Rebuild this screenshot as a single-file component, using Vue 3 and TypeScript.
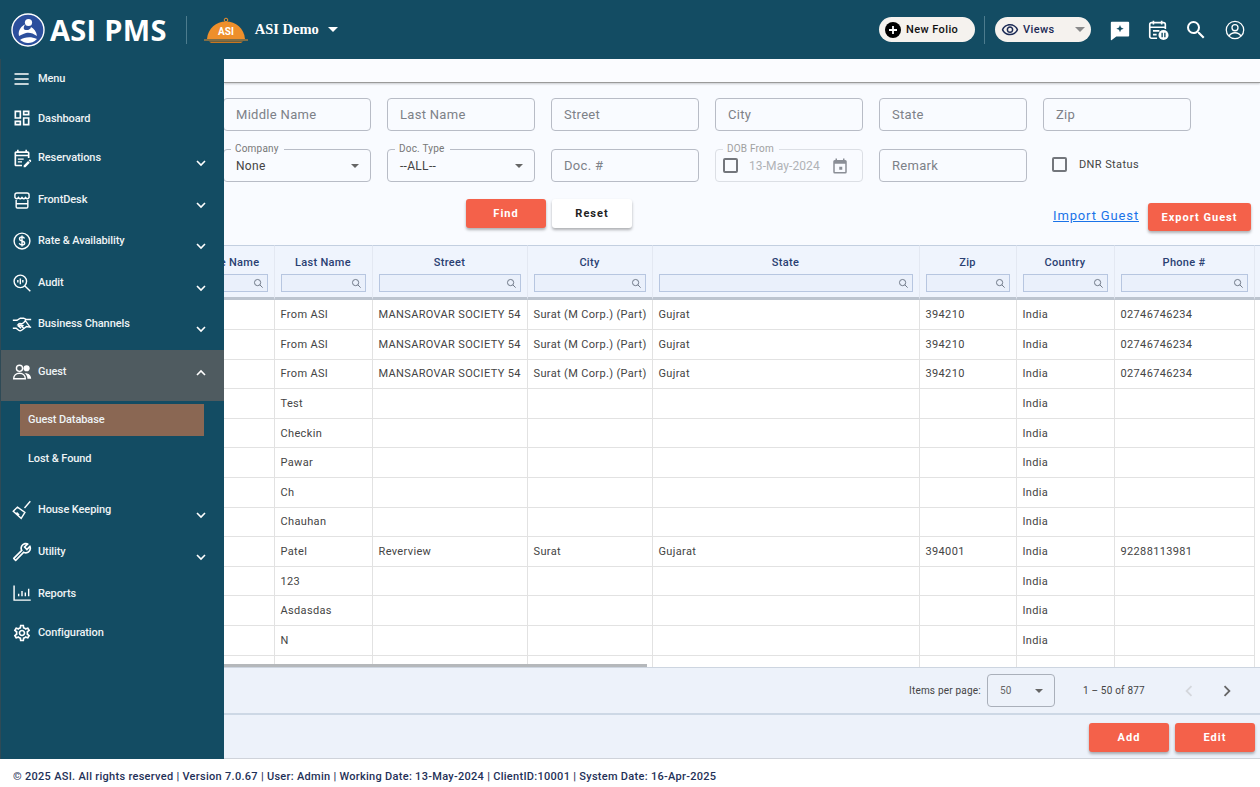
<template>
  <div class="page">
    <header class="topbar">
      <div class="brand">
        <svg class="logo" viewBox="0 0 34 34">
          <circle cx="17" cy="17" r="16" fill="#2c4f9d" stroke="#fff" stroke-width="1.4" />
          <circle cx="17.5" cy="9.5" r="3.6" fill="#fff" />
          <path d="M8 23c-1.5-6 3-10.500 6-11.500-1.500 2.500-2 5 .5 5.500 2.500.4 5-.4 5.500-3 3 1.500 5.500 4.500 6 9-4-3-8-4-11-3-3 .8-5 2-7 3z" fill="#fff" />
          <path d="M9 27c4-2.500 10-4 17-1-3 3-6 4-9 4s-5-1-8-3z" fill="#fff" />
        </svg>
        <span class="brand-name">ASI PMS</span>
      </div>
      <span class="brand-sep"></span>
      <svg class="dome" viewBox="0 0 44 26">
        <circle cx="22" cy="3" r="1.800" fill="none" stroke="#f0902a" stroke-width="1" />
        <path d="M3 22C4 11 12 4.500 22 4.500S40 11 41 22z" fill="#ee8f2b" />
        <path d="M0 23h44" stroke="#ee8f2b" stroke-width="1" />
        <path d="M5 24.500h34l-2 1.500H7z" fill="#c9761f" />
        <text x="22" y="18" text-anchor="middle" class="dome-text">ASI</text>
      </svg>
      <span class="property">ASI Demo</span>
      <span class="caret caret-white"></span>

      <div class="top-right">
        <button class="pill pill-folio">
          <svg class="plus" viewBox="0 0 16 16">
            <circle cx="8" cy="8" r="8" fill="#000" />
            <path d="M8 4v8M4 8h8" stroke="#fff" stroke-width="1.800" />
          </svg>
          New Folio
        </button>
        <span class="top-sep"></span>
        <button class="pill pill-views">
          <svg class="eye" viewBox="0 0 24 24">
            <path fill="#1b2a55" d="M12 6a9.770 9.770 0 0 1 8.820 5.500A9.770 9.770 0 0 1 12 17a9.770 9.770 0 0 1-8.820-5.500A9.770 9.770 0 0 1 12 6m0-2C7 4 2.730 7.110 1 11.500 2.730 15.890 7 19 12 19s9.270-3.110 11-7.500C21.270 7.110 17 4 12 4zm0 5a2.500 2.500 0 0 1 0 5 2.500 2.500 0 0 1 0-5m0-2c-2.480 0-4.500 2.020-4.500 4.500S9.520 16 12 16s4.500-2.020 4.500-4.500S14.480 7 12 7z" />
          </svg>
          Views
          <span class="caret caret-grey"></span>
        </button>
        <svg class="top-icon icon-comment" viewBox="0 0 24 24">
          <path fill="#fff" d="M3 3h18a1 1 0 0 1 1 1v14a1 1 0 0 1-1 1H8l-5 4a.6.6 0 0 1-1-.5V4a1 1 0 0 1 1-1z" />
          <path fill="#134c63" d="M12 6.500l1.100 2.900 2.900 1.100-2.900 1.100L12 14.500l-1.100-2.900L8 10.500l2.900-1.100z" />
        </svg>
        <svg class="top-icon icon-cal" viewBox="0 0 24 24">
          <path fill="none" stroke="#fff" stroke-width="1.800" d="M11 21H5a2 2 0 0 1-2-2V6a2 2 0 0 1 2-2h13a2 2 0 0 1 2 2v5M3 9h17M7 2v4M16 2v4M6.500 13h7M6.500 17h4" />
          <circle cx="18" cy="17.500" r="5.500" fill="#fff" />
          <path d="M16.500 15v5M19.500 15v5" stroke="#134c63" stroke-width="1.500" />
        </svg>
        <svg class="top-icon icon-search" viewBox="0 0 24 24">
          <path fill="#fff" d="M15.500 14h-.79l-.28-.27A6.470 6.470 0 0 0 16 9.500 6.500 6.500 0 1 0 9.500 16c1.610 0 3.090-.59 4.230-1.570l.27.28v.79l5 4.990L20.490 19l-4.990-5zm-6 0C7.010 14 5 11.990 5 9.500S7.010 5 9.500 5 14 7.010 14 9.500 11.990 14 9.500 14z" />
        </svg>
        <svg class="top-icon icon-user" viewBox="0 0 24 24">
          <circle cx="12" cy="12" r="9.500" fill="none" stroke="#fff" stroke-width="1.400" />
          <circle cx="12" cy="9.500" r="3.300" fill="none" stroke="#fff" stroke-width="1.400" />
          <path d="M5.500 18.500c1.500-2.500 4-3.500 6.500-3.500s5 1 6.500 3.500" fill="none" stroke="#fff" stroke-width="1.400" />
        </svg>
      </div>
    </header>

    <div class="body">
      <aside class="sidebar">
        <div class="nav-top">
          <svg class="nav-icon" viewBox="0 0 24 24"><path class="st" d="M3 6h17M3 12h17M3 18h17" /></svg>
          <span>Menu</span>
        </div>
        <div class="nav-top">
          <svg class="nav-icon" viewBox="0 0 24 24"><path class="fl" :d="icons.dashboard" /></svg>
          <span>Dashboard</span>
        </div>
        <div v-for="item in groupsA" :key="item.label" class="nav-group">
          <svg class="nav-icon" viewBox="0 0 24 24"><path :class="item.fill ? 'fl' : 'st'" :d="icons[item.icon]" /></svg>
          <span>{{ item.label }}</span>
          <svg class="chev" viewBox="0 0 12 12"><path d="M2 4l4 4 4-4" /></svg>
        </div>

        <div class="nav-guest">
          <svg class="nav-icon guest-icon" viewBox="0 0 24 24">
            <circle cx="9" cy="7.500" r="3.700" class="st" />
            <path class="st" d="M2 20c0-4 3-6.500 7-6.500s7 2.500 7 6.500z" />
            <circle cx="17.500" cy="7.500" r="3.700" fill="#fff" />
            <path fill="#fff" d="M15 13.500c4-.8 8 2 8 6.500h-4.500c0-2.500-1-5-3.500-6.500z" />
          </svg>
          <span>Guest</span>
          <svg class="chev" viewBox="0 0 12 12"><path d="M2 8l4-4 4 4" /></svg>
        </div>
        <div class="nav-sub">
          <div class="sub-item sub-active">Guest Database</div>
          <div class="sub-item">Lost &amp; Found</div>
        </div>

        <div v-for="item in groupsB" :key="item.label" class="nav-group">
          <svg class="nav-icon" viewBox="0 0 24 24" :class="{ flip: item.icon === 'wrench' }"><path :class="item.fill ? 'fl' : 'st'" :d="icons[item.icon]" /></svg>
          <span>{{ item.label }}</span>
          <svg class="chev" viewBox="0 0 12 12"><path d="M2 4l4 4 4-4" /></svg>
        </div>
        <div class="nav-top nav-reports">
          <svg class="nav-icon" viewBox="0 0 24 24"><path class="st" d="M2.500 3v17.500h20M8 16v-3M12 16V9.500M16 16v-4.500M20 16V7" /></svg>
          <span>Reports</span>
        </div>
        <div class="nav-top">
          <svg class="nav-icon" viewBox="0 0 24 24"><path class="fl" :d="icons.settings" /></svg>
          <span>Configuration</span>
        </div>
      </aside>

      <main class="content">
        <div class="strip"></div>

        <section class="filters">
          <div class="field-grid">
            <div v-for="f in firstRow" :key="f" class="field"><span class="ph">{{ f }}</span></div>

            <div class="field field-label">
              <span class="legend">Company</span>
              <span class="val">None</span>
              <span class="caret caret-dark"></span>
            </div>
            <div class="field field-label">
              <span class="legend">Doc. Type</span>
              <span class="val">--ALL--</span>
              <span class="caret caret-dark"></span>
            </div>
            <div class="field"><span class="ph">Doc. #</span></div>
            <div class="field field-label field-disabled">
              <span class="legend">DOB From</span>
              <span class="check"></span>
              <span class="date">13-May-2024</span>
              <svg class="cal" viewBox="0 0 24 24">
                <path fill="#8a8e96" d="M19 4h-1V2h-2v2H8V2H6v2H5a2 2 0 0 0-2 2v14a2 2 0 0 0 2 2h14a2 2 0 0 0 2-2V6a2 2 0 0 0-2-2zm0 16H5V9h14v11zM11 13h4v4h-4z" />
              </svg>
            </div>
            <div class="field"><span class="ph">Remark</span></div>
            <label class="dnr"><span class="check"></span>DNR Status</label>
          </div>

          <div class="filter-actions">
            <button class="btn btn-red btn-find">Find</button>
            <button class="btn btn-white">Reset</button>
            <a class="import">Import Guest</a>
            <button class="btn btn-red btn-export">Export Guest</button>
          </div>
        </section>

        <div class="table-wrap">
          <table class="grid">
            <colgroup>
              <col v-for="c in columns" :key="c.name" :style="{ width: c.w + 'px' }" />
            </colgroup>
            <thead>
              <tr>
                <th v-for="c in columns" :key="c.name">
                  <template v-if="c.name">
                    <div class="th-name">{{ c.name }}</div>
                    <div class="th-search">
                      <svg viewBox="0 0 12 12"><circle cx="5" cy="5" r="3.400" /><path d="M7.500 7.500L10.500 10.500" /></svg>
                    </div>
                  </template>
                </th>
              </tr>
            </thead>
            <tbody>
              <tr v-for="(r, i) in rows" :key="i">
                <td></td>
                <td>{{ r[0] }}</td>
                <td>{{ r[1] }}</td>
                <td>{{ r[2] }}</td>
                <td>{{ r[3] }}</td>
                <td>{{ r[4] }}</td>
                <td>{{ r[5] }}</td>
                <td>{{ r[6] }}</td>
                <td></td>
              </tr>
            </tbody>
          </table>
          <div class="hscroll"></div>
        </div>

        <div class="pager">
          <span class="pager-label">Items per page:</span>
          <div class="pager-select">
            <span>50</span>
            <span class="caret caret-dark"></span>
          </div>
          <span class="pager-range">1 – 50 of 877</span>
          <svg class="pager-arrow prev" viewBox="0 0 24 24"><path d="M15.400 7.400L14 6l-6 6 6 6 1.400-1.400L10.800 12z" /></svg>
          <svg class="pager-arrow next" viewBox="0 0 24 24"><path d="M10 6L8.600 7.400 13.200 12l-4.600 4.600L10 18l6-6z" /></svg>
        </div>

        <div class="bottom-actions">
          <button class="btn btn-red">Add</button>
          <button class="btn btn-red">Edit</button>
        </div>
      </main>
    </div>

    <footer class="footer">© 2025 ASI. All rights reserved | Version 7.0.67 | User: Admin | Working Date: 13-May-2024 | ClientID:10001 | System Date: 16-Apr-2025</footer>
  </div>
</template>

<script setup lang="ts">
interface NavItem {
  label: string
  icon: string
  fill?: boolean
}

const icons: Record<string, string> = {
  dashboard: 'M19 5v2h-4V5h4M9 5v6H5V5h4m10 8v6h-4v-6h4M9 17v2H5v-2h4M21 3h-8v6h8V3zM11 3H3v10h8V3zm10 8h-8v10h8V11zm-10 4H3v6h8v-6z',
  calendar: 'M5 10h14v2h2V6c0-1.100-.9-2-2-2h-1V2h-2v2H8V2H6v2H5c-1.110 0-1.990.9-1.990 2L3 20c0 1.100.89 2 2 2h7v-2H5V10zm0-4h14v2H5V6zm17.840 10.280-.71.71-2.120-2.120.71-.71c.39-.39 1.020-.39 1.410 0l.71.71c.39.39.39 1.020 0 1.410zm-3.540-.7 2.120 2.120-5.300 5.300H14v-2.120l5.300-5.300zM7 12.500h7V14H7zM7 16h5v1.500H7z',
  store: 'M3.500 9V6a2.500 2.500 0 0 1 2.500-2.500h12A2.500 2.500 0 0 1 20.500 6v3c-1.500 2-2.700 2-4.250 0-1.500 2-2.700 2-4.250 0-1.500 2-2.700 2-4.250 0-1.550 2-2.750 2-4.250 0zM5 12v8a1.500 1.500 0 0 0 1.500 1.500h11A1.500 1.500 0 0 0 19 20v-8M5 16.500h14',
  rate: 'M12 2.500a9.500 9.500 0 1 0 0 19 9.500 9.500 0 0 0 0-19zM15 9c-.5-1.200-1.700-1.800-3-1.800-1.600 0-3 .8-3 2.300 0 3.300 6.200 1.700 6.200 5 0 1.500-1.500 2.300-3.200 2.300-1.500 0-2.800-.7-3.300-2M12 5.500v13',
  audit: 'M10 2.500a7.500 7.500 0 1 0 0 15 7.500 7.500 0 0 0 0-15zM15.500 15.500L22 22M7 8.500v3M10 6.500v7M13 8.500v3',
  shake: 'M1 7.500h5l4-2.500h4l3 1.500h6M1 17h4l3 2.500c1 .8 2.500.8 3.500 0l6-4.500 5.500 1M9 11c2 1.500 4.500 1 7-3l6 8M9 11l-2 2c3 1 5 .5 7 1M7 14l4 3M10 13l4 4',
  broom: 'M22 1.500L15 9.500M6.500 8.500l9 6.500-4.500 7-9.500-8.500zM5.500 15l3 3',
  wrench: 'M22.610 18.990l-9.080-9.080c.93-2.340.45-5.100-1.440-7C9.790.61 6.210.4 3.660 2.260L7.500 6.110 6.080 7.520 2.250 3.690C.39 6.230.6 9.820 2.900 12.110c1.860 1.860 4.570 2.350 6.890 1.480l9.110 9.110c.39.39 1.020.39 1.410 0l2.300-2.300c.4-.38.4-1.010 0-1.410zm-3 1.600l-9.460-9.460c-.61.45-1.290.72-2 .82-1.360.2-2.790-.21-3.830-1.250C3.370 9.760 2.930 8.500 3 7.260l3.090 3.090 4.240-4.240-3.090-3.090c1.240-.07 2.490.37 3.440 1.310 1.080 1.080 1.490 2.570 1.240 3.960-.12.71-.42 1.370-.88 1.960l9.450 9.450-.88.88z',
  settings: 'M19.430 12.980c.04-.32.07-.64.07-.98 0-.34-.03-.66-.07-.98l2.110-1.650c.19-.15.24-.42.12-.64l-2-3.460c-.09-.16-.26-.25-.44-.25-.06 0-.12.01-.17.03l-2.490 1c-.52-.4-1.080-.73-1.690-.98l-.38-2.650C14.460 2.180 14.250 2 14 2h-4c-.25 0-.46.18-.49.42l-.38 2.650c-.61.25-1.170.59-1.690.98l-2.490-1c-.06-.02-.12-.03-.18-.03-.17 0-.34.09-.43.25l-2 3.460c-.13.22-.07.49.12.64l2.110 1.650c-.04.32-.07.65-.07.98 0 .33.03.66.07.98l-2.110 1.650c-.19.15-.24.42-.12.64l2 3.460c.09.16.26.25.44.25.06 0 .12-.01.17-.03l2.490-1c.52.4 1.080.73 1.690.98l.38 2.650c.03.24.24.42.49.42h4c.25 0 .46-.18.49-.42l.38-2.650c.61-.25 1.170-.59 1.690-.98l2.490 1c.06.02.12.03.18.03.17 0 .34-.09.43-.25l2-3.460c.12-.22.07-.49-.12-.64l-2.110-1.650zm-1.980-1.710c.04.31.05.52.05.73 0 .21-.02.43-.05.73l-.14 1.130.89.7 1.080.84-.7 1.210-1.270-.51-1.040-.42-.9.68c-.43.32-.84.56-1.250.73l-1.060.43-.16 1.130-.2 1.350h-1.400l-.19-1.350-.16-1.130-1.060-.43c-.43-.18-.83-.41-1.230-.71l-.91-.7-1.060.43-1.270.51-.7-1.210 1.080-.84.89-.7-.14-1.130c-.03-.31-.05-.54-.05-.74s.02-.43.05-.73l.14-1.130-.89-.7-1.080-.84.7-1.210 1.270.51 1.040.42.9-.68c.43-.32.84-.56 1.250-.73l1.060-.43.16-1.130.2-1.350h1.390l.19 1.350.16 1.130 1.060.43c.43.18.83.41 1.230.71l.91.7 1.060-.43 1.270-.51.7 1.210-1.070.85-.89.7.14 1.130zM12 8c-2.210 0-4 1.790-4 4s1.790 4 4 4 4-1.790 4-4-1.790-4-4-4zm0 6c-1.100 0-2-.9-2-2s.9-2 2-2 2 .9 2 2-.9 2-2 2z'
}

const groupsA: NavItem[] = [
  { label: 'Reservations', icon: 'calendar', fill: true },
  { label: 'FrontDesk', icon: 'store' },
  { label: 'Rate & Availability', icon: 'rate' },
  { label: 'Audit', icon: 'audit' },
  { label: 'Business Channels', icon: 'shake' }
]

const groupsB: NavItem[] = [
  { label: 'House Keeping', icon: 'broom' },
  { label: 'Utility', icon: 'wrench', fill: true }
]

const firstRow = ['Middle Name', 'Last Name', 'Street', 'City', 'State', 'Zip']

const columns = [
  { name: 'Middle Name', w: 98 },
  { name: 'Last Name', w: 98 },
  { name: 'Street', w: 155 },
  { name: 'City', w: 125 },
  { name: 'State', w: 267 },
  { name: 'Zip', w: 97 },
  { name: 'Country', w: 98 },
  { name: 'Phone #', w: 140 },
  { name: '', w: 60 }
]

const asi = ['From ASI', 'MANSAROVAR SOCIETY 54', 'Surat (M Corp.) (Part)', 'Gujrat', '394210', 'India', '02746746234']
const nameOnly = (n: string) => [n, '', '', '', '', 'India', '']

const rows: string[][] = [
  asi,
  asi,
  asi,
  nameOnly('Test'),
  nameOnly('Checkin'),
  nameOnly('Pawar'),
  nameOnly('Ch'),
  nameOnly('Chauhan'),
  ['Patel', 'Reverview', 'Surat', 'Gujarat', '394001', 'India', '92288113981'],
  nameOnly('123'),
  nameOnly('Asdasdas'),
  nameOnly('N'),
  ['', '', '', '', '', '', '']
]
</script>

<style scoped>
.page {
  width: 1260px;
  height: 787px;
  display: flex;
  flex-direction: column;
  overflow: hidden;
  font-family: Roboto, "Liberation Sans", sans-serif;
  background: #fff;
}

.topbar {
  height: 59px;
  flex: none;
  display: flex;
  align-items: center;
  background: #134c63;
  padding-left: 11px;
  padding-right: 14px;
}

.brand {
  display: flex;
  align-items: center;
}

.logo {
  width: 34px;
  height: 34px;
}

.brand-name {
  margin-left: 5px;
  font-family: "Open Sans", sans-serif;
  font-weight: 700;
  font-size: 29px;
  letter-spacing: 0.3px;
  color: #fff;
}

.brand-sep {
  width: 1px;
  height: 28px;
  margin-left: 19px;
  background: #4d7c8e;
}

.dome {
  width: 44px;
  height: 26px;
  margin-left: 17px;
}

.dome-text {
  font-family: Roboto, sans-serif;
  font-size: 10px;
  font-weight: 700;
  fill: #fff;
}

.property {
  margin-left: 7px;
  font-family: "Liberation Serif", serif;
  font-weight: 700;
  font-size: 14.500px;
  color: #fff;
}

.caret {
  display: inline-block;
  width: 0;
  height: 0;
  border-left: 5px solid transparent;
  border-right: 5px solid transparent;
  border-top: 5px solid #757575;
}

.caret-white {
  margin-left: 9px;
  border-top-color: #fff;
}

.top-right {
  margin-left: auto;
  display: flex;
  align-items: center;
}

.pill {
  height: 25px;
  border: none;
  border-radius: 13px;
  background: #f5f2ee;
  display: flex;
  align-items: center;
  font-family: inherit;
  font-size: 11px;
  font-weight: 500;
  letter-spacing: 0.4px;
  color: #111;
  padding: 0 0 0 6px;
}

.pill-folio {
  width: 96px;
}

.plus {
  width: 16px;
  height: 16px;
  margin-right: 5px;
}

.top-sep {
  width: 1px;
  height: 28px;
  margin: 0 10px 0 9px;
  background: #4d7c8e;
}

.pill-views {
  width: 96px;
  position: relative;
  color: #1b2a55;
}

.eye {
  width: 18px;
  height: 18px;
  margin-right: 4px;
}

.caret-grey {
  margin-left: auto;
  margin-right: 6px;
  border-top-color: #8a8a8a;
}

.top-icon {
  display: block;
}

.icon-comment {
  width: 22px;
  height: 22px;
  margin-left: 18px;
}

.icon-cal {
  width: 22px;
  height: 22px;
  margin-left: 16px;
}

.icon-search {
  width: 24px;
  height: 24px;
  margin-left: 15px;
}

.icon-user {
  width: 22px;
  height: 22px;
  margin-left: 16px;
}

.body {
  flex: 1;
  min-height: 0;
  display: flex;
}

.sidebar {
  width: 224px;
  flex: none;
  background: #134c63;
  border-left: 1px solid #2e4a56;
  box-sizing: border-box;
  color: #eef3f5;
  font-size: 11px;
  font-weight: 500;
  letter-spacing: -0.1px;
}

.nav-top {
  height: 39.500px;
  display: flex;
  align-items: center;
  padding-left: 11px;
}

.nav-reports {
  margin-top: 0.500px;
}

.nav-group {
  height: 41.500px;
  display: flex;
  align-items: flex-start;
  padding: 10px 0 0 11px;
  box-sizing: border-box;
}

.nav-group > span {
  line-height: 20px;
}

.nav-icon {
  width: 20px;
  height: 20px;
  flex: none;
  margin-right: 6px;
}

.nav-icon .st,
.guest-icon .st {
  fill: none;
  stroke: #fff;
  stroke-width: 1.700;
}

.nav-icon .fl {
  fill: #fff;
}

.flip {
  transform: scaleX(-1);
}

.chev {
  width: 12px;
  height: 12px;
  margin-left: auto;
  margin-right: 17px;
  margin-top: 9px;
  fill: none;
  stroke: #fff;
  stroke-width: 1.600;
}

.nav-guest {
  height: 51px;
  margin-top: 4.500px;
  background: #4f5b60;
  display: flex;
  align-items: flex-start;
  padding: 12px 0 0 11px;
  box-sizing: border-box;
}

.nav-guest > span {
  line-height: 20px;
}

.nav-guest .chev {
  margin-top: 5px;
}

.nav-sub {
  height: 89px;
  padding-top: 3px;
  box-sizing: border-box;
}

.sub-item {
  height: 32px;
  margin: 0 20px 7px 19px;
  padding-left: 8px;
  line-height: 32px;
}

.sub-active {
  background: #8a6753;
}

.content {
  flex: 1;
  min-width: 0;
  display: flex;
  flex-direction: column;
  overflow: hidden;
  background: #f9fbff;
}

.strip {
  height: 23px;
  flex: none;
  background: #fbfcff;
  border-bottom: 1px solid #9a9a9a;
  box-shadow: 0 1px 2px rgba(0, 0, 0, 0.2);
}

.filters {
  height: 162px;
  flex: none;
  padding-top: 15px;
  box-sizing: border-box;
}

.field-grid {
  display: grid;
  grid-template-columns: repeat(6, 148px);
  grid-auto-rows: 33px;
  column-gap: 16px;
  row-gap: 18px;
  margin-left: -1px;
}

.field {
  position: relative;
  display: flex;
  align-items: center;
  border: 1px solid #b8bcc6;
  border-radius: 4px;
  padding: 0 11px 0 12px;
  box-sizing: border-box;
  font-size: 13px;
  letter-spacing: 0.3px;
}

.ph {
  color: #7d8188;
}

.legend {
  position: absolute;
  left: 7px;
  top: -7px;
  padding: 0 5px 0 4px;
  font-size: 10px;
  line-height: 12px;
  letter-spacing: 0.2px;
  color: #777;
  background: #f9fbff;
}

.val {
  flex: 1;
  font-size: 12px;
  color: #444;
}

.caret-dark {
  border-left-width: 4.500px;
  border-right-width: 4.500px;
  border-top-width: 4.500px;
  border-top-color: #666;
}

.field-disabled {
  border-color: #dcdfe5;
  padding: 0 0 0 7px;
}

.field-disabled .legend {
  color: #a0a0a0;
}

.check {
  width: 15px;
  height: 15px;
  flex: none;
  border: 2px solid #73767c;
  border-radius: 2px;
  box-sizing: border-box;
}

.date {
  margin-left: 11px;
  font-size: 12px;
  letter-spacing: 0.1px;
  color: #b0b2b6;
}

.cal {
  width: 18px;
  height: 18px;
  margin-left: 11px;
}

.dnr {
  display: flex;
  align-items: center;
  padding-left: 9px;
  font-size: 11px;
  letter-spacing: 0.4px;
  color: #444;
  margin-top: -2px;
}

.dnr .check {
  margin-right: 12px;
}

.filter-actions {
  display: flex;
  align-items: center;
  margin-top: 16px;
  padding-left: 242px;
  height: 30px;
}

.btn {
  width: 80px;
  height: 29px;
  border: none;
  border-radius: 3px;
  font-family: inherit;
  font-size: 11px;
  font-weight: 700;
  letter-spacing: 1px;
  box-shadow: 0 2px 3px rgba(0, 0, 0, 0.3);
}

.btn-red {
  background: #f4614a;
  color: #fff;
}

.btn-white {
  background: #fff;
  color: #222;
  margin-left: 6px;
}

.import {
  margin-left: auto;
  margin-top: 4px;
  font-size: 13px;
  letter-spacing: 0.85px;
  color: #1a73e8;
  text-decoration: underline;
}

.btn-export {
  width: 103px;
  height: 28px;
  margin-left: 9px;
  margin-right: 9px;
  margin-top: 8px;
}

.table-wrap {
  position: relative;
  height: 422px;
  flex: none;
  overflow: hidden;
  background: #fff;
}

.grid {
  table-layout: fixed;
  border-collapse: separate;
  border-spacing: 0;
  width: 1138px;
  margin-left: -47.500px;
}

.grid th {
  height: 55.400px;
  padding: 0 6px;
  box-sizing: border-box;
  background: #eff4fd;
  border-top: 1px solid #c3cfe0;
  border-bottom: 3px solid #bcc4cf;
  border-right: 1px solid #e3e8f2;
  vertical-align: top;
}

.th-name {
  margin-top: 10px;
  font-size: 11px;
  font-weight: 500;
  letter-spacing: 0.3px;
  line-height: 14px;
  color: #2a3f72;
}

.th-search {
  height: 18px;
  margin-top: 4px;
  border: 1px solid #b7c6e0;
  box-sizing: border-box;
  background: #eaf0fb;
  display: flex;
  justify-content: flex-end;
  align-items: center;
  padding-right: 3px;
}

.th-search svg {
  width: 11px;
  height: 11px;
  fill: none;
  stroke: #66707f;
  stroke-width: 1;
}

.grid td {
  height: 29.600px;
  padding: 0 6px;
  box-sizing: border-box;
  font-size: 11px;
  letter-spacing: 0.35px;
  color: #444;
  white-space: nowrap;
  overflow: hidden;
  border-right: 1px solid #e2e2e2;
  border-bottom: 1px solid #e2e2e2;
}

.grid td:last-child {
  border-right: none;
  border-bottom: none;
}

.hscroll {
  position: absolute;
  left: 0;
  bottom: 0;
  width: 423px;
  height: 3px;
  background: #b5b8bb;
}

.pager {
  height: 48px;
  flex: none;
  box-sizing: border-box;
  display: flex;
  align-items: center;
  background: #edf2fa;
  border-top: 1px solid #cdd5e0;
  border-bottom: 2px solid #cdd8e5;
  font-size: 10px;
  letter-spacing: 0.2px;
  color: #444;
  padding-left: 685px;
}

.pager-select {
  width: 68px;
  height: 33px;
  margin-left: 6px;
  border: 1px solid #aab0ba;
  border-radius: 4px;
  box-sizing: border-box;
  display: flex;
  align-items: center;
  justify-content: space-between;
  padding: 0 11px 0 12px;
  color: #666;
}

.pager-range {
  margin-left: 28px;
}

.pager-arrow {
  width: 22px;
  height: 22px;
}

.prev {
  margin-left: 33px;
  fill: #d4d7dc;
}

.next {
  margin-left: 16px;
  fill: #666;
}

.bottom-actions {
  flex: 1;
  min-height: 0;
  display: flex;
  justify-content: flex-end;
  align-items: flex-start;
  gap: 6px;
  padding: 8px 5px 0 0;
  box-sizing: border-box;
  background: #edf2fa;
  border-bottom: 1px solid #cfd3da;
}

.footer {
  height: 28px;
  flex: none;
  display: flex;
  align-items: center;
  padding: 7px 0 0 13px;
  box-sizing: border-box;
  font-size: 11px;
  font-weight: 500;
  letter-spacing: 0.29px;
  color: #1f3158;
  background: #fff;
}
</style>
